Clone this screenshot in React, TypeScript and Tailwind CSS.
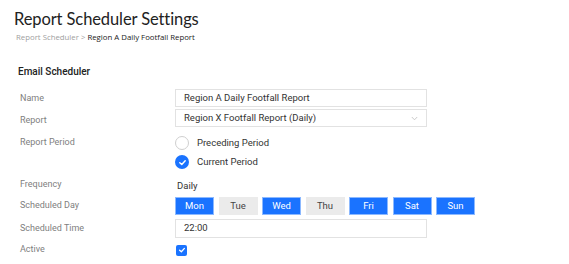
import React from "react";

const days: { d: string; on: boolean }[] = [
  { d: "Mon", on: true },
  { d: "Tue", on: false },
  { d: "Wed", on: true },
  { d: "Thu", on: false },
  { d: "Fri", on: true },
  { d: "Sat", on: true },
  { d: "Sun", on: true },
];

function Check({ size = 8 }: { size?: number }) {
  return (
    <svg width={size} height={size} viewBox="0 0 10 10" fill="none">
      <path d="M2 5.2 L4.2 7.2 L8 3" stroke="white" strokeWidth="1.6" strokeLinecap="round" strokeLinejoin="round" />
    </svg>
  );
}

export default function App() {
  return (
    <div className="w-[569px] h-[264px] bg-white overflow-hidden font-['Roboto',sans-serif]">
      <div className="pl-[14px] pt-[7px]">
        <div className="text-[16.5px] leading-[24px] text-[#222] font-['Lato',sans-serif] tracking-[-0.1px]">Report Scheduler Settings</div>
        <div className="pl-[2px] text-[7.8px] leading-[12px] font-['Open_Sans',sans-serif]">
          <span className="text-[#a0a0a0]">Report Scheduler &gt; </span>
          <span className="text-[#222]">Region A Daily Footfall Report</span>
        </div>
      </div>
      <div className="pl-[18px] mt-[22px] text-[10px] leading-[14px] font-medium text-[#222]">Email Scheduler</div>

      <div className="pl-[20px] flex flex-col text-[9px] text-[#808080]">
        <div className="flex items-center h-[18px] mt-[10px]">
          <div className="w-[155px] pt-[1px]">Name</div>
          <div className="w-[252px] h-[18px] border border-[#e2e2e2] flex items-center pl-[8px] text-[9.5px] text-[#333]">Region A Daily Footfall Report</div>
        </div>
        <div className="flex items-center h-[18px] mt-[2px]">
          <div className="w-[155px] pt-[6px]">Report</div>
          <div className="w-[252px] h-[18px] border border-[#e2e2e2] flex items-center justify-between pl-[8px] pr-[8px] text-[9.5px] text-[#333]">
            <span>Region X Footfall Report (Daily)</span>
            <svg width="7" height="5" viewBox="0 0 7 5" fill="none">
              <path d="M0.8 1 L3.5 3.8 L6.2 1" stroke="#c4c4c4" strokeWidth="0.9" />
            </svg>
          </div>
        </div>
        <div className="flex mt-[8px]">
          <div className="w-[155px] h-[16px] flex items-center">Report Period</div>
          <div className="flex flex-col gap-[3px] text-[9.5px] text-[#333]">
            <div className="flex items-center h-[16px]">
              <div className="w-[14px] h-[14px] rounded-full border border-[#cfcfcf]" />
              <span className="ml-[8px]">Preceding Period</span>
            </div>
            <div className="flex items-center h-[16px]">
              <div className="w-[14px] h-[14px] rounded-full bg-[#1a73ff] flex items-center justify-center">
                <Check size={9} />
              </div>
              <span className="ml-[8px]">Current Period</span>
            </div>
          </div>
        </div>
        <div className="flex items-center h-[14px] mt-[8px]">
          <div className="w-[155px]">Frequency</div>
          <div className="pl-[2px] pt-[3px] text-[9.5px] text-[#333]">Daily</div>
        </div>
        <div className="flex items-center h-[18px] mt-[5px]">
          <div className="w-[155px]">Scheduled Day</div>
          <div className="flex gap-[4.5px]">
            {days.map((x) => (
              <div
                key={x.d}
                className={
                  x.on
                    ? "w-[39px] h-[18px] flex items-center justify-center bg-[#1a73ff] border border-[#8cb9ff] text-white text-[9.5px]"
                    : "w-[39px] h-[18px] flex items-center justify-center bg-[#ebebeb] text-[#444] text-[9.5px]"
                }
              >
                {x.d}
              </div>
            ))}
          </div>
        </div>
        <div className="flex items-center h-[19px] mt-[4px]">
          <div className="w-[155px]">Scheduled Time</div>
          <div className="w-[252px] h-[19px] border border-[#e2e2e2] flex items-center pl-[8px] text-[9.5px] text-[#333]">22:00</div>
        </div>
        <div className="flex items-center h-[12px] mt-[6px]">
          <div className="w-[156px]">Active</div>
          <div className="w-[11px] h-[11px] rounded-[2px] bg-[#1a73ff] flex items-center justify-center">
            <Check size={8} />
          </div>
        </div>
      </div>
    </div>
  );
}
